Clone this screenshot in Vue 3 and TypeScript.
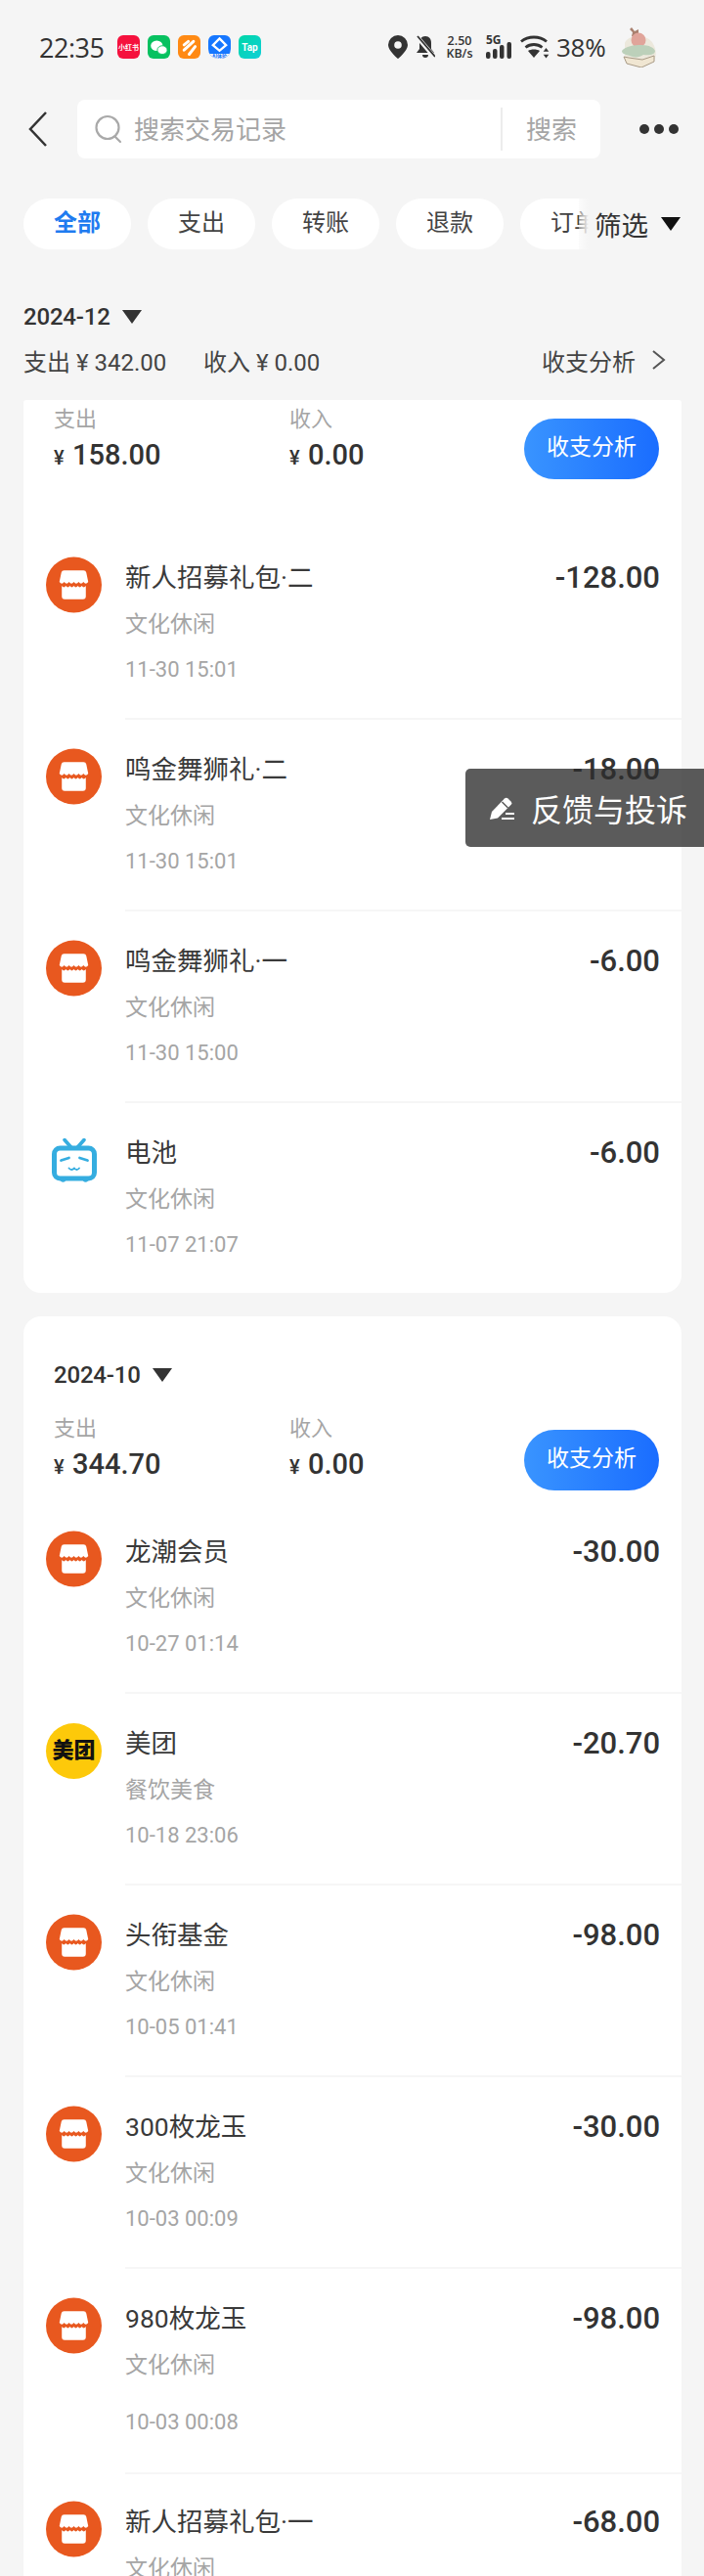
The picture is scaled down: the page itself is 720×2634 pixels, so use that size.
<script setup lang="ts">
type Row = { title: string; sub: string; time?: string; amount: string; icon: 'store' | 'bili' | 'meituan'; tall?: boolean };

const first: Row[] = [
  { title: '新人招募礼包·二', sub: '文化休闲', time: '11-30 15:01', amount: '-128.00', icon: 'store' },
  { title: '鸣金舞狮礼·二', sub: '文化休闲', time: '11-30 15:01', amount: '-18.00', icon: 'store' },
  { title: '鸣金舞狮礼·一', sub: '文化休闲', time: '11-30 15:00', amount: '-6.00', icon: 'store' },
  { title: '电池', sub: '文化休闲', time: '11-07 21:07', amount: '-6.00', icon: 'bili' },
];
const second: Row[] = [
  { title: '龙潮会员', sub: '文化休闲', time: '10-27 01:14', amount: '-30.00', icon: 'store' },
  { title: '美团', sub: '餐饮美食', time: '10-18 23:06', amount: '-20.70', icon: 'meituan' },
  { title: '头衔基金', sub: '文化休闲', time: '10-05 01:41', amount: '-98.00', icon: 'store' },
  { title: '300枚龙玉', sub: '文化休闲', time: '10-03 00:09', amount: '-30.00', icon: 'store' },
  { title: '980枚龙玉', sub: '文化休闲', time: '10-03 00:08', amount: '-98.00', icon: 'store', tall: true },
  { title: '新人招募礼包·一', sub: '文化休闲', amount: '-68.00', icon: 'store' },
];
const tabs = ['全部', '支出', '转账', '退款', '订单'];
const groups = [
  { rows: first, top: true, month: '', out: '158.00', inc: '0.00' },
  { rows: second, top: false, month: '2024-10', out: '344.70', inc: '0.00' },
];
</script>

<template>
  <div class="page">
    <header class="status">
      <div class="status-left">
        <span class="clock">22:35</span>
        <span class="app red">小红书</span>
        <span class="app green">
          <svg viewBox="0 0 24 24" width="21" height="21"><ellipse cx="9.500" cy="10" rx="7" ry="6" fill="#fff"/><ellipse cx="16" cy="15" rx="5.800" ry="5" fill="#fff" stroke="#07c160" stroke-width="1"/></svg>
        </span>
        <span class="app orange">
          <svg viewBox="0 0 24 24" width="21" height="21"><path d="M6 9l5-4M6 15l11-10M12 20l7-9" stroke="#fff" stroke-width="3.400" stroke-linecap="round" fill="none"/></svg>
        </span>
        <span class="app blue">
          <svg viewBox="0 0 24 24" width="23" height="23"><path d="M12 3.500l7 7-7 6-7-6z" fill="none" stroke="#fff" stroke-width="2.400"/></svg>
          <span class="ai">AI体验</span>
        </span>
        <span class="app teal">Tap</span>
      </div>
      <div class="status-right">
        <svg class="pin" viewBox="0 0 20 24" width="20" height="24"><path d="M10 0a10 10 0 0 0-10 10c0 6 10 14 10 14s10-8 10-14a10 10 0 0 0-10-10z" fill="#333"/><circle cx="10" cy="10" r="3.800" fill="#f5f5f5"/></svg>
        <svg class="bell" viewBox="0 0 20 24" width="20" height="24"><path d="M10 1c-4 0-6 3-6 7v6l-3 4h18l-3-4V8c0-4-2-7-6-7z" fill="#333"/><path d="M7 20h6a3 3 0 0 1-6 0z" fill="#333"/><path d="M1 1l18 21" stroke="#f5f5f5" stroke-width="4.500"/><path d="M2 1l18 21" stroke="#333" stroke-width="1.800"/></svg>
        <div class="speed"><span>2.50</span><span>KB/s</span></div>
        <div class="net">
          <span class="five">5G</span>
          <svg viewBox="0 0 27 17" width="27" height="17"><rect x="0" y="10" width="4.500" height="7" rx="2" fill="#333"/><rect x="7" y="7" width="4.500" height="10" rx="2" fill="#333"/><rect x="14" y="3" width="4.500" height="14" rx="2" fill="#333"/><rect x="21.500" y="0" width="4.500" height="17" rx="2" fill="#333"/></svg>
        </div>
        <svg class="wifi" viewBox="0 0 30 24" width="30" height="24"><path d="M1 7.500C8 1.500 20 1.500 27 7.500" fill="none" stroke="#333" stroke-width="2.800" transform="translate(0 -1)"/><path d="M5.500 12.500C10.500 8.500 17.500 8.500 22.500 12.500" fill="none" stroke="#333" stroke-width="2.800"/><path d="M8 16l6 7 6-7c-3-2-9-2-12 0z" fill="#333"/><path d="M26.500 13l2.800 3.800h-5.600zM26.500 23.500l-2.800-3.800h5.600z" fill="#333"/></svg>
        <span class="batt">38%</span>
        <svg class="cake" viewBox="0 0 40 41" width="40" height="41"><path d="M13 0l3 4 4-2 0 5 4 1-5 4-6-3 1-4-3-3z" fill="#a9806f"/><path d="M6 16c3-9 24-10 29 1 4 7 3 13 1 17l-12 4-18-5z" fill="#ece8dc"/><circle cx="20" cy="13" r="7.500" fill="#e0a49a"/><path d="M3 24c4-5 12-6 20-6s13 3 14 6c0 4-6 5-12 4-4 3-10 3-14 1-4-1-8-2-8-5z" fill="#bcd0ba"/><path d="M5 30l3 7 15 4 13-6v-6l-12 4-14-2z" fill="#f0e6d2" stroke="#a89a86" stroke-width="1"/></svg>
      </div>
    </header>

    <nav class="nav">
      <svg class="back" viewBox="0 0 22 38" width="22" height="38"><path d="M19 2L3 19l16 17" fill="none" stroke="#333" stroke-width="2.500"/></svg>
      <div class="search">
        <svg class="lens" viewBox="0 0 30 30" width="30" height="30"><circle cx="14" cy="13.500" r="11.500" fill="none" stroke="#a9a9a9" stroke-width="2.200"/><path d="M22 23l5 5" stroke="#a9a9a9" stroke-width="2.200" stroke-linecap="round"/></svg>
        <span class="ph">搜索交易记录</span>
        <span class="search-btn">搜索</span>
      </div>
      <div class="dots"><i></i><i></i><i></i></div>
    </nav>

    <div class="tabs">
      <div class="tab-track">
        <span v-for="(t, i) in tabs" :key="t" class="tab" :class="{ on: i === 0 }">{{ t }}</span>
      </div>
      <div class="filter"><span>筛选</span><b class="tri big"></b></div>
    </div>

    <div class="month">
      <div class="month-line"><span>2024-12</span><b class="tri"></b></div>
      <div class="totals">
        <span class="t-out">支出 ¥ 342.00</span>
        <span>收入 ¥ 0.00</span>
        <span class="t-link">收支分析
          <svg viewBox="0 0 16 22" width="16" height="22"><path d="M2 2l11 9-11 9" fill="none" stroke="#555" stroke-width="2"/></svg>
        </span>
      </div>
    </div>

    <section v-for="(g, gi) in groups" :key="gi" class="card" :class="{ cut: g.top }">
      <div v-if="g.month" class="month-line inner"><span>{{ g.month }}</span><b class="tri"></b></div>
      <div class="summary">
        <div class="sum-col">
          <span class="sum-label">支出</span>
          <span class="sum-val"><small>¥</small>{{ g.out }}</span>
        </div>
        <div class="sum-col">
          <span class="sum-label">收入</span>
          <span class="sum-val"><small>¥</small>{{ g.inc }}</span>
        </div>
        <span class="analyze">收支分析</span>
      </div>
      <ul class="rows">
        <li v-for="r in g.rows" :key="r.title" class="row" :class="{ tall: r.tall }">
          <div class="avatar">
            <svg v-if="r.icon === 'store'" viewBox="0 0 58 58" width="57" height="58">
              <circle cx="29" cy="29" r="29" fill="#e8581f"/>
              <path d="M19 14h20a3 3 0 0 1 3 2.400l2 9.600q-2.500 3.500-5 0q-2.500 3.500-5 0q-2.500 3.500-5 0q-2.500 3.500-5 0q-2.500 3.500-5 0q-2.500 3.500-5 0l2-9.600a3 3 0 0 1 3-2.400z" fill="#fff"/>
              <path d="M16.500 30q2.100 3 4.200 0q2 3 4.200 0q2 3 4.100 0q2.100 3 4.200 0q2.100 3 4.100 0q2.100 3 4.200 0v11a3 3 0 0 1-3 3h-19a3 3 0 0 1-3-3z" fill="#fff"/>
            </svg>
            <svg v-else-if="r.icon === 'bili'" viewBox="0 0 46 45" width="46" height="45">
              <path d="M13 1.500l7 8M33 1.500l-7 8" stroke="#35ade0" stroke-width="3.600" stroke-linecap="round"/>
              <rect x="2.500" y="10" width="41" height="31" rx="6" fill="#fff" stroke="#35ade0" stroke-width="5"/>
              <circle cx="11.500" cy="42" r="2.800" fill="#35ade0"/><circle cx="34.500" cy="42" r="2.800" fill="#35ade0"/>
              <path d="M9.500 22.500l8-2.500M36.500 22.500l-8-2.500" stroke="#35ade0" stroke-width="2.800" stroke-linecap="round"/>
              <path d="M17.500 30.500q2.500 3 5.500 0q2.500 3 5 0" fill="none" stroke="#35ade0" stroke-width="1.800" stroke-linecap="round"/>
            </svg>
            <span v-else class="mt">美团</span>
          </div>
          <div class="row-main">
            <div class="row-head">
              <span class="row-title">{{ r.title }}</span>
              <span class="row-amt">{{ r.amount }}</span>
            </div>
            <span class="row-sub">{{ r.sub }}</span>
            <span v-if="r.time" class="row-time">{{ r.time }}</span>
          </div>
        </li>
      </ul>
    </section>

    <div class="feedback">
      <svg viewBox="0 0 27 26" width="27" height="26"><path d="M1 25l2-8L16 3.500a2.500 2.500 0 0 1 3.500 0l3 3a2.500 2.500 0 0 1 0 3.500L9 23.500z" fill="#fff"/><path d="M13.500 7l6 6" stroke="#5c5c5c" stroke-width="1.500"/><path d="M17 19h9M13 24h13" stroke="#fff" stroke-width="1.800"/></svg>
      <span>反馈与投诉</span>
    </div>
  </div>
</template>

<style scoped>
.page {
  position: relative;
  width: 720px;
  height: 2634px;
  overflow: hidden;
  background: #f5f5f5;
  color: #333;
  font-family: Roboto, "Noto Sans CJK SC", sans-serif;
}
.status {
  height: 96px;
  box-sizing: border-box;
  padding: 0 47px 0 40px;
  display: flex;
  justify-content: space-between;
  align-items: center;
}
.status-left { display: flex; align-items: center; gap: 8px; }
.clock { font-size: 27px; font-weight: 500; width: 72px; margin-right: 0; font-family: "Open Sans", sans-serif; letter-spacing: -0.5px; white-space: nowrap; }
.app {
  width: 23px;
  height: 24px;
  border-radius: 6px;
  display: flex;
  align-items: center;
  justify-content: center;
  position: relative;
  color: #fff;
  font-size: 8px;
  font-weight: 700;
  overflow: hidden;
  white-space: nowrap;
}
.red { background: #f5113d; font-size: 7px; }
.green { background: #07c160; }
.orange { background: #ff8a14; }
.blue { background: #1677ff; align-items: flex-start; border-radius: 6px 6px 10px 10px; }
.ai { position: absolute; bottom: 0; left: 0; right: 0; height: 5px; background: #f5f5f5; color: #1677ff; font-size: 5px; line-height: 5px; text-align: center; }
.teal { background: linear-gradient(135deg, #00d7a6, #10cfd8); font-size: 10px; }
.status-right { display: flex; align-items: center; }
.status-right svg { flex: none; }
.bell { margin-left: 8px; }
.speed {
  width: 30px;
  margin-left: 10px;
  display: flex;
  flex-direction: column;
  align-items: center;
  font-family: "Open Sans", sans-serif;
  font-size: 12.500px;
  font-weight: 600;
  line-height: 13px;
  white-space: nowrap;
}
.net { margin-left: 12px; display: flex; flex-direction: column; font-size: 12px; font-weight: 700; line-height: 11px; font-family: "Open Sans", sans-serif; width: 27px; }
.five { height: 7px; line-height: 9px; }
.wifi { margin-left: 8px; }
.batt { margin-left: 7px; width: 49px; font-family: "Open Sans", sans-serif; font-size: 26px; letter-spacing: -0.3px; white-space: nowrap; }
.cake { margin-left: 15px; }

.nav {
  height: 60px;
  margin-top: 6px;
  padding-left: 28px;
  display: flex;
  align-items: center;
}
.back { flex: none; width: 22px; margin-right: 29px; }
.search {
  flex: none;
  width: 535px;
  height: 60px;
  box-sizing: border-box;
  background: #fff;
  border-radius: 8px;
  display: flex;
  align-items: center;
  padding-left: 17px;
}
.lens { flex: none; }
.ph { margin-left: 11px; font-size: 26px; line-height: 42px; padding-top: 2px; color: #a5a5a5; flex: 1; }
.search-btn {
  flex: none;
  box-sizing: border-box;
  font-size: 26px;
  color: #a5a5a5;
  height: 44px;
  line-height: 42px;
  padding: 2px 24px 0;
  width: 102px;
  border-left: 2px solid #ececec;
  white-space: nowrap;
}
.dots { flex: none; margin-left: 40px; display: flex; gap: 5px; }
.dots i { width: 10px; height: 10px; border-radius: 50%; background: #333; }

.tabs {
  position: relative;
  height: 52px;
  margin-top: 41px;
  padding-left: 24px;
  overflow: hidden;
}
.tab-track { display: flex; gap: 17px; width: 800px; }
.tab {
  flex: none;
  width: 110px;
  height: 52px;
  line-height: 50px;
  border-radius: 26px;
  background: #fff;
  text-align: center;
  font-size: 24px;
  color: #444;
}
.tab.on { color: #1f7bf0; font-weight: 700; }
.tab:last-child { text-align: left; padding-left: 31px; box-sizing: border-box; }
.filter {
  position: absolute;
  top: 0;
  left: 592px;
  right: 0;
  height: 52px;
  background: linear-gradient(90deg, rgba(245,245,245,0.4) 0, #f5f5f5 10px);
  display: flex;
  align-items: center;
  padding-left: 16px;
  gap: 13px;
  font-size: 27.500px;
}
.tri {
  display: inline-block;
  width: 0;
  height: 0;
  border-left: 10px solid transparent;
  border-right: 10px solid transparent;
  border-top: 14px solid #333;
  flex: none;
}
.tri.big { border-top-color: #111; }

.month { padding: 0 38px 0 24px; margin-top: 55px; height: 99px; }
.month-line {
  display: flex;
  align-items: center;
  gap: 12px;
  font-size: 24px;
  font-weight: 500;
  letter-spacing: -0.2px;
  height: 28px;
  line-height: 28px;
}
.totals {
  display: flex;
  align-items: center;
  margin-top: 15px;
  height: 30px;
  font-size: 24px;
  color: #444;
}
.t-out { width: 184px; }
.t-link { margin-left: auto; display: flex; align-items: center; gap: 16px; }

.card {
  width: 673px;
  margin-left: 24px;
  background: #fff;
  border-radius: 18px;
  box-sizing: border-box;
}
.card.cut { border-radius: 3px 3px 18px 18px; padding-top: 7px; margin-bottom: 24px; }
.month-line.inner { padding: 46px 0 0 31px; box-sizing: content-box; }
.summary { position: relative; display: flex; padding-left: 31px; height: 80px; }
.card:not(.cut) .summary { margin-top: 28px; }
.sum-col { width: 241px; display: flex; flex-direction: column; }
.sum-label { font-size: 22px; color: #a5a5a5; line-height: 26px; height: 26px; }
.sum-val { margin-top: 5px; font-size: 29px; font-weight: 500; line-height: 36px; display: flex; align-items: baseline; }
.sum-val small { font-size: 20px; font-weight: 500; width: 19px; }
.analyze {
  position: absolute;
  right: 23px;
  top: 12px;
  width: 138px;
  height: 62px;
  border-radius: 31px;
  background: linear-gradient(90deg, #3994ff, #1a6dff);
  color: #fff;
  text-align: center;
  line-height: 60px;
  font-size: 23px;
}
.card:not(.cut) .analyze { top: 14px; }
.rows { list-style: none; margin: 73px 0 0; padding: 0; }
.card:not(.cut) .rows { margin-top: 37px; }
.row { display: flex; align-items: flex-start; height: 196px; box-sizing: border-box; padding-left: 23px; }
.row.tall { height: 208px; }
.row:last-child { height: 165px; }
.avatar { flex: none; width: 57px; height: 58px; display: flex; align-items: center; justify-content: center; }
.mt {
  width: 57px;
  height: 57px;
  border-radius: 50%;
  background: #fdc90a;
  color: #111;
  font-size: 22px;
  font-weight: 900;
  text-align: center;
  line-height: 56px;
  white-space: nowrap;
}
.row-main {
  flex: 1;
  height: 167px;
  box-sizing: border-box;
  margin-left: 24px;
  display: flex;
  flex-direction: column;
  border-bottom: 2px solid #f6f6f6;
}
.row.tall .row-main { height: 181px; }
.row:last-child .row-main { border-bottom: 0; height: 165px; }
.row-head { display: flex; justify-content: space-between; padding-right: 22px; height: 40px; margin-top: 2px; }
.row-title { font-size: 26.500px; line-height: 40px; color: #3a3a3a; }
.row-amt { font-size: 31px; font-weight: 500; line-height: 40px; color: #333; }
.row-sub { margin-top: 13px; font-size: 23px; line-height: 30px; color: #a5a5a5; }
.row-time { margin-top: 18px; font-size: 22px; line-height: 26px; color: #a5a5a5; }
.row.tall .row-time { margin-top: 30px; }

.feedback {
  position: absolute;
  left: 476px;
  top: 786px;
  width: 244px;
  height: 80px;
  box-sizing: border-box;
  padding-left: 24px;
  border-radius: 5px 0 0 5px;
  background: rgba(45, 45, 45, 0.78);
  color: #fff;
  display: flex;
  align-items: center;
  gap: 16px;
  font-size: 32px;
}
</style>
